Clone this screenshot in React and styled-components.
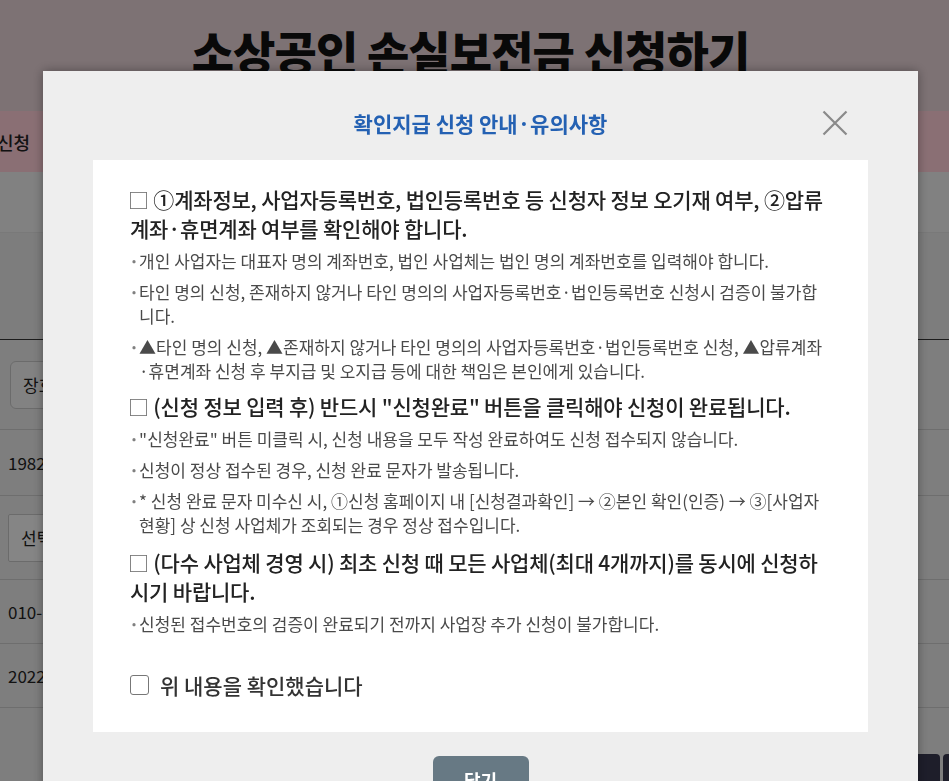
import React from "react";
import styled, { createGlobalStyle } from "styled-components";

const GlobalStyle = createGlobalStyle`
  html, body {
    margin: 0;
    padding: 0;
    overflow: hidden;
    background: #e9e9e9;
  }
  body {
    font-family: "Noto Sans CJK KR", "Noto Sans", sans-serif;
  }
  * { box-sizing: border-box; }
`;

/* ---------- page behind the dialog ---------- */

const Page = styled.div`
  width: 949px;
  height: 781px;
  overflow: hidden;
  background: #e6e6e6;
  display: flex;
  flex-direction: column;
  & > * { flex-shrink: 0; }
`;

const Header = styled.header`
  height: 111px;
  background: #e3cfd3;
  display: flex;
  justify-content: center;
  padding-top: 20px;
  padding-right: 8px;
`;

const PageTitle = styled.h1`
  margin: 0;
  font-size: 46px;
  line-height: 60px;
  font-weight: 900;
  letter-spacing: -0.9px;
  color: #111;
`;

const TabBar = styled.nav`
  height: 61px;
  background: #fccbd4;
  display: flex;
  align-items: center;
`;

const Tab = styled.span`
  font-size: 18px;
  font-weight: 500;
  color: #222;
  margin-left: -3px;
`;

const StepBar = styled.div`
  height: 61px;
  background: #ebebeb;
  border-bottom: 1px solid #dcdcdc;
`;

const Intro = styled.div`
  height: 107px;
  background: #e4e4e4;
  border-bottom: 1px solid #333;
`;

const FormTable = styled.div`
  display: flex;
  flex-direction: column;
`;

const FormRow = styled.div`
  height: ${(p) => p.$h}px;
  display: flex;
  align-items: center;
  padding-left: 8px;
  border-bottom: 1px solid #c9c9c9;
  font-size: 17px;
  color: #222;
`;

const FieldBox = styled.div`
  height: ${(p) => p.$h}px;
  width: 220px;
  margin-left: ${(p) => p.$ml}px;
  display: flex;
  align-items: center;
  padding-left: 12px;
  border: 1px solid #c4c4c4;
  border-radius: ${(p) => (p.$round ? 6 : 2)}px;
  background: ${(p) => (p.$round ? "#ededed" : "#f3f3f3")};
  font-size: 17px;
  color: #222;
`;

const BottomBar = styled.div`
  margin-top: 46px;
  display: flex;
  justify-content: flex-end;
  gap: 3px;
  margin-right: -84px;
`;

const DarkButton = styled.div`
  width: 90px;
  height: 50px;
  border-radius: 4px;
  background: #37374e;
`;

const Dim = styled.div`
  position: fixed;
  inset: 0;
  background: rgba(0, 0, 0, 0.45);
`;

/* ---------- dialog ---------- */

const Dialog = styled.section`
  position: fixed;
  top: 71px;
  left: 43px;
  width: 875px;
  background: #eeeeee;
  box-shadow: 0 0 10px rgba(0, 0, 0, 0.35);
  display: flex;
  flex-direction: column;
  padding-bottom: 30px;
`;

const DialogHeader = styled.div`
  height: 89px;
  padding-top: 14px;
  display: grid;
  grid-template-columns: 1fr auto 1fr;
  align-items: center;
`;

const DialogTitle = styled.h2`
  grid-column: 2;
  margin: 0;
  font-size: 21px;
  font-weight: 700;
  letter-spacing: 0;
  color: #2461b3;
`;

const CloseButton = styled.button`
  grid-column: 3;
  justify-self: end;
  margin-right: 67px;
  width: 32px;
  height: 32px;
  padding: 0;
  border: 0;
  background: transparent;
  display: flex;
  align-items: center;
  justify-content: center;
  cursor: pointer;
`;

const Sheet = styled.div`
  margin: 0 50px;
  background: #fff;
  padding: 25px 30px 32px 37px;
  display: flex;
  flex-direction: column;
`;

const Notice = styled.div`
  margin-top: ${(p) => p.$mt}px;
`;

const NoticeHead = styled.p`
  margin: 0;
  font-size: 21px;
  line-height: 29px;
  font-weight: 500;
  letter-spacing: -0.2px;
  color: #222;
  white-space: nowrap;
`;

const Box = styled.span`
  color: #666;
  font-weight: 400;
  margin-left: -2px;
`;

const BulletList = styled.ul`
  list-style: none;
  margin: 6px 0 0;
  padding: 0;
  display: flex;
  flex-direction: column;
  gap: 7px;
`;

const Bullet = styled.li`
  display: flex;
  font-size: 17px;
  line-height: 24px;
  letter-spacing: 0;
  color: #4a4a4a;
  white-space: nowrap;
`;

const Dot = styled.span`
  flex: 0 0 10px;
  color: #808080;
  font-weight: 700;
  margin-left: -1px;
`;

const ConfirmRow = styled.label`
  margin-top: 34px;
  display: flex;
  align-items: center;
  gap: 11px;
  font-size: 21px;
  line-height: 30px;
  font-weight: 500;
  letter-spacing: 0;
  color: #333;
  cursor: pointer;
`;

const CheckBox = styled.input`
  appearance: none;
  margin: 0;
  width: 19px;
  height: 20px;
  border: 1px solid #777;
  border-radius: 3px;
  background: #fff;
`;

const DialogFooter = styled.div`
  padding-top: 24px;
  display: flex;
  justify-content: center;
`;

const PrimaryButton = styled.button`
  width: 96px;
  height: 48px;
  border: 0;
  border-radius: 6px;
  background: #677984;
  color: #fff;
  font-family: inherit;
  font-size: 18px;
  font-weight: 700;
  cursor: pointer;
`;

const notices = [
  {
    mt: 0,
    head: (
      <>
        ①계좌정보, 사업자등록번호, 법인등록번호 등 신청자 정보 오기재 여부, ②압류
        <br />
        계좌·휴면계좌 여부를 확인해야 합니다.
      </>
    ),
    items: [
      <>개인 사업자는 대표자 명의 계좌번호, 법인 사업체는 법인 명의 계좌번호를 입력해야 합니다.</>,
      <>
        타인 명의 신청, 존재하지 않거나 타인 명의의 사업자등록번호·법인등록번호 신청시 검증이 불가합
        <br />
        니다.
      </>,
      <>
        ▲타인 명의 신청, ▲존재하지 않거나 타인 명의의 사업자등록번호·법인등록번호 신청, ▲압류계좌
        <br />
        ·휴면계좌 신청 후 부지급 및 오지급 등에 대한 책임은 본인에게 있습니다.
      </>,
    ],
  },
  {
    mt: 9,
    head: <>(신청 정보 입력 후) 반드시 "신청완료" 버튼을 클릭해야 신청이 완료됩니다.</>,
    items: [
      <>"신청완료" 버튼 미클릭 시, 신청 내용을 모두 작성 완료하여도 신청 접수되지 않습니다.</>,
      <>신청이 정상 접수된 경우, 신청 완료 문자가 발송됩니다.</>,
      <>
        * 신청 완료 문자 미수신 시, ①신청 홈페이지 내 [신청결과확인] → ②본인 확인(인증) → ③[사업자
        <br />
        현황] 상 신청 사업체가 조회되는 경우 정상 접수입니다.
      </>,
    ],
  },
  {
    mt: 11,
    head: (
      <>
        (다수 사업체 경영 시) 최초 신청 때 모든 사업체(최대 4개까지)를 동시에 신청하
        <br />
        시기 바랍니다.
      </>
    ),
    items: [<>신청된 접수번호의 검증이 완료되기 전까지 사업장 추가 신청이 불가합니다.</>],
  },
];

function CloseIcon() {
  return (
    <svg width="26" height="26" viewBox="0 0 26 26" fill="none">
      <path d="M1.5 1.5 L24.5 24.5 M24.5 1.5 L1.5 24.5" stroke="#8a8a8a" strokeWidth="2.2" />
    </svg>
  );
}

export default function App() {
  return (
    <>
      <GlobalStyle />
      <Page>
        <Header>
          <PageTitle>소상공인 손실보전금 신청하기</PageTitle>
        </Header>
        <TabBar>
          <Tab>신청</Tab>
        </TabBar>
        <StepBar />
        <Intro />
        <FormTable>
          <FormRow $h={90}>
            <FieldBox $h={48} $ml={2} $round>
              장호준
            </FieldBox>
          </FormRow>
          <FormRow $h={66}>1982-03-15</FormRow>
          <FormRow $h={84}>
            <FieldBox $h={48} $ml={0}>
              선택
            </FieldBox>
          </FormRow>
          <FormRow $h={64}>010-1234-5678</FormRow>
          <FormRow $h={64}>2022-05-30</FormRow>
        </FormTable>
        <BottomBar>
          <DarkButton />
          <DarkButton />
        </BottomBar>
      </Page>
      <Dim />
      <Dialog role="dialog" aria-label="확인지급 신청 안내·유의사항">
        <DialogHeader>
          <DialogTitle>확인지급 신청 안내·유의사항</DialogTitle>
          <CloseButton aria-label="닫기">
            <CloseIcon />
          </CloseButton>
        </DialogHeader>
        <Sheet>
          {notices.map((n, i) => (
            <Notice key={i} $mt={n.mt}>
              <NoticeHead>
                <Box>□</Box> {n.head}
              </NoticeHead>
              <BulletList>
                {n.items.map((it, j) => (
                  <Bullet key={j}>
                    <Dot>·</Dot>
                    <span>{it}</span>
                  </Bullet>
                ))}
              </BulletList>
            </Notice>
          ))}
          <ConfirmRow>
            <CheckBox type="checkbox" />
            위 내용을 확인했습니다
          </ConfirmRow>
        </Sheet>
        <DialogFooter>
          <PrimaryButton>닫기</PrimaryButton>
        </DialogFooter>
      </Dialog>
    </>
  );
}
